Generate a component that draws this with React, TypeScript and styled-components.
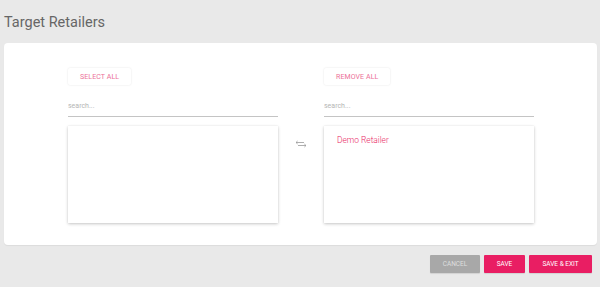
import React from "react";
import styled, { createGlobalStyle } from "styled-components";

const Global = createGlobalStyle`
  html, body { margin: 0; padding: 0; background: #e9e9e9; }
  body { font-family: Roboto, "Liberation Sans", sans-serif; }
  * { box-sizing: border-box; }
`;

const Page = styled.div`
  padding: 0 3px 0 4px;
  height: 287px;
`;

const Title = styled.h1`
  margin: 0;
  height: 43px;
  padding-top: 13px;
  font-size: 14.5px;
  font-weight: 400;
  color: #666;
  line-height: 20px;
`;

const Card = styled.div`
  background: #fff;
  border-radius: 4px;
  height: 202px;
  padding: 25px 63px 0 64px;
  display: flex;
  justify-content: center;
  box-shadow: 0 1px 1px rgba(0, 0, 0, 0.06);
`;

const Column = styled.div`
  width: 210px;
  display: flex;
  flex-direction: column;
  align-items: flex-start;
`;

const Middle = styled.div`
  width: 46px;
  display: flex;
  justify-content: center;
  padding-top: 72px;
`;

const OutlineButton = styled.button`
  height: 17px;
  padding: 0 12px;
  background: #fff;
  border: none;
  border-radius: 2px;
  box-shadow: 0 0 2px rgba(0, 0, 0, 0.12);
  color: #ec6f98;
  font-family: inherit;
  font-size: 7px;
  letter-spacing: 0.1px;
  text-transform: uppercase;
  cursor: pointer;
`;

const Search = styled.input`
  margin-top: 11px;
  width: 100%;
  height: 21px;
  border: none;
  border-bottom: 1px solid #c4c4c4;
  padding: 0;
  font-family: inherit;
  font-size: 7px;
  color: #444;
  outline: none;
  &::placeholder { color: #b5b5b5; }
`;

const ListBox = styled.div`
  margin-top: 9px;
  width: 100%;
  height: 97px;
  background: #fff;
  box-shadow: 0 1px 3px rgba(0, 0, 0, 0.22), 0 0 1px rgba(0, 0, 0, 0.08);
  padding: 8px 13px;
`;

const Item = styled.div`
  color: #e91e63;
  font-size: 8.4px;
  font-weight: 300;
  line-height: 12px;
`;

const Footer = styled.div`
  display: flex;
  justify-content: flex-end;
  gap: 4px;
  padding: 10px 5px 0 0;
`;

const ActionButton = styled.button<{ $muted?: boolean; $w: number }>`
  height: 18px;
  width: ${(p) => p.$w}px;
  border: none;
  border-radius: 1px;
  background: ${(p) => (p.$muted ? "#a8a8a8" : "#e91e63")};
  color: ${(p) => (p.$muted ? "#dedede" : "#fff")};
  font-family: inherit;
  font-size: 6.5px;
  text-transform: uppercase;
  box-shadow: 0 1px 1px rgba(0, 0, 0, 0.1);
  cursor: pointer;
`;

const SwapIcon = () => (
  <svg width="12" height="8" viewBox="0 0 12 8" fill="none" stroke="#9a9a9a" strokeWidth="0.8">
    <path d="M1 2.5h8M1 2.5l1.6-1.5M1 2.5l1.6 1.4" />
    <path d="M3 5.5h8M11 5.5l-1.6-1.4M11 5.5l-1.6 1.5" />
  </svg>
);

export default function App() {
  return (
    <Page>
      <Global />
      <Title>Target Retailers</Title>
      <Card>
        <Column>
          <OutlineButton>Select All</OutlineButton>
          <Search placeholder="search..." />
          <ListBox />
        </Column>
        <Middle>
          <SwapIcon />
        </Middle>
        <Column>
          <OutlineButton>Remove All</OutlineButton>
          <Search placeholder="search..." />
          <ListBox>
            <Item>Demo Retailer</Item>
          </ListBox>
        </Column>
      </Card>
      <Footer>
        <ActionButton $muted $w={50}>Cancel</ActionButton>
        <ActionButton $w={41}>Save</ActionButton>
        <ActionButton $w={63}>Save &amp; Exit</ActionButton>
      </Footer>
    </Page>
  );
}
